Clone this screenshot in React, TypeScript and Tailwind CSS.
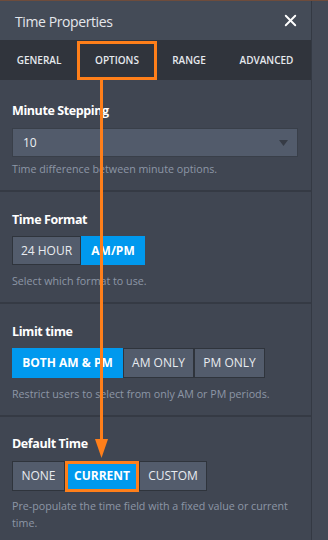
import { X } from "lucide-react";

const tabs = ["GENERAL", "OPTIONS", "RANGE", "ADVANCED"];

function Seg({ items, active, widths }: { items: string[]; active: number; widths: string[] }) {
  return (
    <div className="flex h-full">
      {items.map((label, i) => (
        <div
          key={label}
          className={
            i === active
              ? `${widths[i]} h-full flex items-center justify-center bg-[#0099ee] text-white font-bold`
              : `${widths[i]} h-full flex items-center justify-center bg-[#535c6c] border border-[#2f343c] text-[#e8ebf0] font-medium`
          }
        >
          {label}
        </div>
      ))}
    </div>
  );
}

export default function App() {
  return (
    <div
      className="relative w-[328px] h-[540px] overflow-hidden bg-[#404652] flex flex-col"
      style={{ fontFamily: '"Open Sans", "Noto Sans", sans-serif' }}
    >
      <div className="h-px bg-[#6e4c3c] shrink-0" />
      <div className="flex flex-1">
        <div className="w-[311px] flex flex-col">
          {/* Header */}
          <div className="h-[39px] bg-[#444b57] flex items-center justify-between pl-[15px] pr-[11px]">
            <span className="text-[14px] tracking-[-0.4px] text-[#e4e7ec] mt-px">Time Properties</span>
            <X className="w-[19px] h-[19px] text-white" strokeWidth={2.4} />
          </div>

          {/* Tabs */}
          <div className="h-10 bg-[#30343c] flex items-center">
            {tabs.map((t, i) => (
              <div
                key={t}
                className={
                  i === 0
                    ? "w-[78px] text-center text-[10px] font-semibold text-[#e6e9ee]"
                    : i === 1
                    ? "w-[78px] text-center text-[10px] font-semibold text-[#e6e9ee]"
                    : i === 2
                    ? "w-[66px] text-center text-[10px] font-semibold text-[#e6e9ee]"
                    : "w-[89px] text-center text-[10px] font-semibold text-[#e6e9ee]"
                }
              >
                {t}
              </div>
            ))}
          </div>

          {/* Minute Stepping */}
          <div className="px-3 pt-[22px] pb-3 border-b-2 border-[#353a44]">
            <div className="text-[12.5px] leading-[18px] font-bold tracking-[-0.4px] text-white">Minute Stepping</div>
            <div className="mt-2 h-[29px] w-[286px] bg-[#525b6b] border border-[#393f49] flex items-center justify-between pl-[10px] pr-[9px]">
              <span className="text-[12px] text-[#eef0f3]">10</span>
              <svg width="9" height="6" viewBox="0 0 9 6">
                <path d="M0 0 L9 0 L4.5 6 Z" fill="#363b45" />
              </svg>
            </div>
            <div className="mt-[3px] text-[10.7px] leading-[18px] text-[#8d96a6]">
              Time difference between minute options.
            </div>
          </div>

          {/* Time Format */}
          <div className="px-3 pt-[19px] pb-3 border-b-2 border-[#353a44]">
            <div className="text-[12.5px] leading-[18px] font-bold tracking-[-0.4px] text-white">Time Format</div>
            <div className="mt-[7px] h-[29px] text-[12px]">
              <Seg items={["24 HOUR", "AM/PM"]} active={1} widths={["w-[69px]", "w-[64px]"]} />
            </div>
            <div className="mt-[7px] text-[10.7px] leading-[18px] text-[#8d96a6]">Select which format to use.</div>
          </div>

          {/* Limit time */}
          <div className="px-3 pt-[19px] pb-3 border-b-2 border-[#353a44]">
            <div className="text-[12.5px] leading-[18px] font-bold tracking-[-0.4px] text-white">Limit time</div>
            <div className="mt-[7px] h-[30px] text-[12px]">
              <Seg
                items={["BOTH AM & PM", "AM ONLY", "PM ONLY"]}
                active={0}
                widths={["w-[111px]", "w-[71px]", "w-[71px]"]}
              />
            </div>
            <div className="mt-[7px] text-[10.7px] leading-[18px] text-[#8d96a6]">
              Restrict users to select from only AM or PM periods.
            </div>
          </div>

          {/* Default Time */}
          <div className="px-3 pt-[18px]">
            <div className="text-[12.5px] leading-[18px] font-bold tracking-[-0.4px] text-white">Default Time</div>
            <div className="mt-2 h-[30px] text-[12px]">
              <Seg items={["NONE", "CURRENT", "CUSTOM"]} active={1} widths={["w-[53px]", "w-[74px]", "w-[68px]"]} />
            </div>
            <div className="mt-[7px] text-[10.7px] leading-[17px] text-[#8d96a6]">
              Pre-populate the time field with a fixed value or current time.
            </div>
          </div>
        </div>
        <div className="flex-1 border-l border-[#343943] bg-[#434955]" />
      </div>

      {/* Annotation overlay */}
      <div className="absolute left-[77px] top-[41px] w-[80px] h-[39px] border-[3px] border-[#ff7f1a]" />
      <div className="absolute left-[100px] top-[80px] w-[3px] h-[362px] bg-[#ff7f1a]" />
      <svg className="absolute left-[95px] top-[439px]" width="13" height="19" viewBox="0 0 13 19">
        <path d="M0 0 L13 0 L6.5 19 Z" fill="#ff7f1a" />
      </svg>
      <div className="absolute left-[65px] top-[461px] w-[74px] h-[31px] border-[3px] border-[#ff7f1a]" />
    </div>
  );
}
